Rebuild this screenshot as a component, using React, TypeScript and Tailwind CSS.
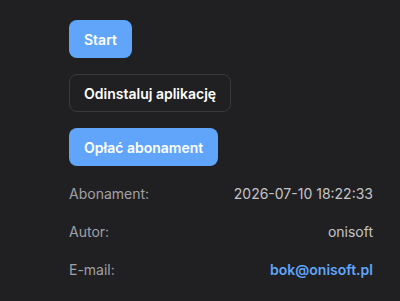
export default function App() {
  const rows = [
    { label: 'Abonament:', value: '2026-07-10 18:22:33' },
    { label: 'Autor:', value: 'onisoft' },
  ];

  return (
    <div
      className="min-h-[301px] w-full bg-[#202022] pl-[69px] pr-[27px] pt-[20px]"
      style={{ fontFamily: 'Inter, "Noto Sans", sans-serif' }}
    >
      <div className="flex flex-col items-start gap-4">
        <button className="h-[38px] rounded-lg border border-transparent bg-[#60a5fa] px-[14px] text-[14px] font-semibold text-white">
          Start
        </button>
        <button className="h-[38px] rounded-lg border border-[#3a3a3e] bg-transparent px-[14px] text-[14px] font-semibold text-white">
          Odinstaluj aplikację
        </button>
        <button className="h-[38px] rounded-lg border border-transparent bg-[#60a5fa] px-[14px] text-[14px] font-semibold text-white">
          Opłać abonament
        </button>
      </div>

      <div className="mt-2 flex flex-col text-[14px]">
        {rows.map((r) => (
          <div key={r.label} className="flex h-[38px] items-center justify-between">
            <span className="text-[#a1a1a6]">{r.label}</span>
            <span className="text-[#c4c4c8]">{r.value}</span>
          </div>
        ))}
        <div className="flex h-[38px] items-center justify-between">
          <span className="text-[#a1a1a6]">E-mail:</span>
          <a href="mailto:bok@onisoft.pl" className="font-semibold text-[#60a5fa]">
            bok@onisoft.pl
          </a>
        </div>
      </div>
    </div>
  );
}
